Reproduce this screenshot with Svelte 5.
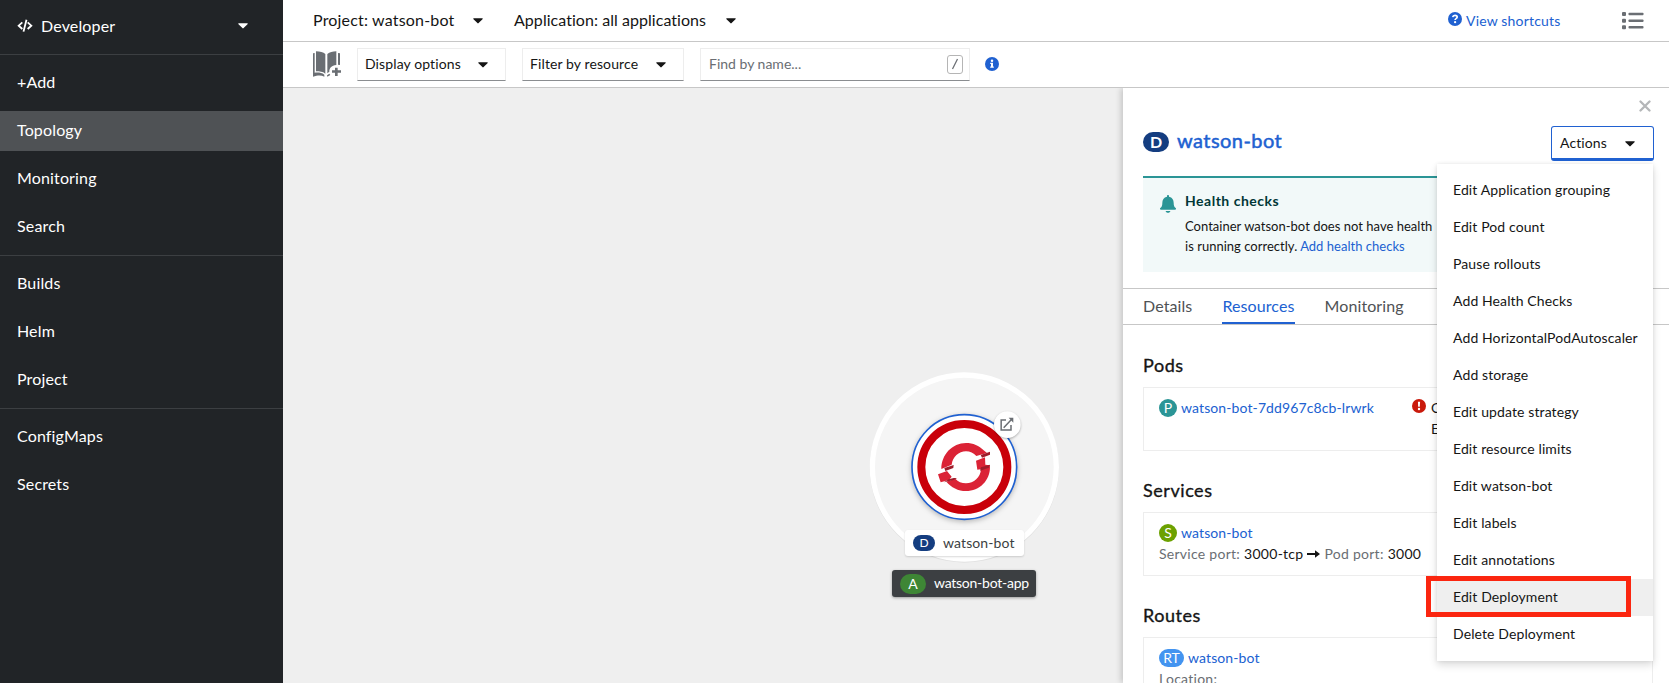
<script>
  const nav = [
    ['+Add', 'Topology', 'Monitoring', 'Search'],
    ['Builds', 'Helm', 'Project'],
    ['ConfigMaps', 'Secrets']
  ];
  const activeNav = 'Topology';
  const tabs = ['Details', 'Resources', 'Monitoring'];
  const activeTab = 'Resources';
  const actions = [
    'Edit Application grouping',
    'Edit Pod count',
    'Pause rollouts',
    'Add Health Checks',
    'Add HorizontalPodAutoscaler',
    'Add storage',
    'Edit update strategy',
    'Edit resource limits',
    'Edit watson-bot',
    'Edit labels',
    'Edit annotations',
    'Edit Deployment',
    'Delete Deployment'
  ];
  const hovered = 'Edit Deployment';
</script>

{#snippet caret()}
  <svg class="caret" viewBox="0 0 10 6" width="10" height="6"><path d="M.9.3h8.2c.6 0 .8.6.4 1L5.6 5.100c-.4.4-.8.4-1.200 0L.5 1.300C.1.900.3.300.9.300z" fill="currentColor" /></svg>
{/snippet}

<div class="app">
  <nav class="sidebar">
    <div class="perspective">
      <svg viewBox="0 0 48 40" width="16" height="13.300" fill="none" stroke="#fff" stroke-width="5.500">
        <path d="M16 10 5 20l11 10M32 10l11 10-11 10M28.500 2l-9 36" />
      </svg>
      <span>Developer</span>
      {@render caret()}
    </div>
    {#each nav as group}
      <ul>
        {#each group as item}
          <li class:active={item === activeNav}>{item}</li>
        {/each}
      </ul>
    {/each}
  </nav>

  <main>
    <header class="context">
      <span class="project">Project: watson-bot</span>
      {@render caret()}
      <span class="application">Application: all applications</span>
      {@render caret()}
      <a class="shortcuts" href="#shortcuts">
        <svg viewBox="0 0 14 14" width="14" height="14"><circle cx="7" cy="7" r="7" fill="#2061d1" /><path d="M4.700 5.200C5 3.600 6.100 3.300 7 3.300c1.300 0 2.200.8 2.200 1.800C9.200 6.700 7.100 6.500 7.100 8" fill="none" stroke="#fff" stroke-width="1.700" /><circle cx="7.100" cy="10.200" r="1.150" fill="#fff" /></svg>
        <span>View shortcuts</span>
      </a>
      <svg class="list" viewBox="0 0 22 18" width="22" height="18" fill="#6a6e73">
        <rect x="0" y="0" width="4" height="4" rx="1" /><rect x="6.500" y=".8" width="15" height="2.500" rx=".8" />
        <rect x="0" y="6.700" width="4" height="4" rx="1" /><rect x="6.500" y="7.500" width="15" height="2.500" rx=".8" />
        <rect x="0" y="13.300" width="4" height="4" rx="1" /><rect x="6.500" y="14.100" width="15" height="2.500" rx=".8" />
      </svg>
    </header>

    <div class="toolbar">
      <svg class="book" viewBox="99 156 84 80" width="28" height="26.700" fill="#6a6e73">
        <path d="M108 157c12 1 22 3 28 8v59c-8-6-17-7-28-7z" />
        <path d="M142 165c7-5 16-7 27-8v41c-15 1-22 11-21 20l-6 5z" />
        <path d="M99 163l5-1v59c12-1 21 0 29 6v6c-9-5-19-5-34 0zM174 162l6 1v35l-6-1zM141 229l7-5 3 4-9 5z" />
        <path d="M165 206h8v8h10v7h-10v10h-8v-10h-9v-7h9z" />
      </svg>
      <div class="select display"><span>Display options</span>{@render caret()}</div>
      <div class="select filter"><span>Filter by resource</span>{@render caret()}</div>
      <div class="search"><span>Find by name...</span><kbd><svg viewBox="0 0 8 12" width="8" height="12"><path d="M1.500 11 6.500 1" stroke="#6a6e73" stroke-width="1.300" /></svg></kbd></div>
      <svg class="info" viewBox="0 0 14 14" width="14" height="14"><circle cx="7" cy="7" r="7" fill="#2061d1" /><path d="M5.200 5.700H8v3.700h.8v1.400H5.200V9.400H6V7.100h-.8z" fill="#fff" /><circle cx="7" cy="3.800" r="1.250" fill="#fff" /></svg>
    </div>

    <div class="body">
      <section class="canvas">
        <svg class="node" viewBox="0 0 630 630" width="210" height="210">
          <circle cx="313" cy="324" r="284" fill="#000" opacity=".06" />
          <circle cx="313" cy="321" r="276" fill="#f5f5f5" stroke="#fff" stroke-width="16" />
          <circle class="disc" cx="313" cy="321" r="157" fill="#fff" stroke="#2061d1" stroke-width="5" />
          <circle cx="313" cy="321" r="129" fill="#fff" stroke="#c9000a" stroke-width="24" />
          <g transform="translate(120 135)">
            <path fill="#db2336" d="M124 192C124 149 157 114 198 114c21 0 40 8 53 22l10 8-32 9c-8-8-19-14-31-14-22 0-40 17-43 40z" />
            <path fill="#db2336" d="M270 186c0 41-31 72-72 72-23 0-45-11-59-28l27-9c8 9 19 14 32 14 24 0 43-17 45-42z" />
            <path fill="#db2336" d="m114 208 27-10 14 17-8 10-25 7zM228 167l27-10 1 22 14 2-1 7-37 6z" />
            <path fill="#9e1d2b" d="m133 189 28-9-1 9-24 9zM146 223l15-4h10l-10 6-29 7zM242 150l28-10v9l-24 9zM243 187l27-8-3 9-27 9z" />
          </g>
        </svg>
        <svg class="open" viewBox="0 0 90 90" width="30" height="30">
          <circle cx="46" cy="47" r="40" fill="#fff" />
          <g fill="none" stroke="#6a6e73" stroke-width="4.500"><path d="M42 33H27.500v30H57V48M35 56l24-25" /></g>
          <path d="M50 26h14v15z" fill="#6a6e73" />
        </svg>
        <div class="node-label"><b>D</b><span>watson-bot</span></div>
        <div class="app-label"><b>A</b><span>watson-bot-app</span></div>
      </section>

      <aside class="panel">
        <svg class="close" viewBox="0 0 12 12" width="12" height="12"><path d="m1.500 1.500 9 9m0-9-9 9" stroke="#b4b6b8" stroke-width="2.300" stroke-linecap="round" /></svg>
        <div class="title">
          <b class="badge deployment">D</b>
          <h1>watson-bot</h1>
          <div class="actions">
            <button><span>Actions</span>{@render caret()}</button>
            <ul class="menu">
              {#each actions as action}
                <li class:hovered={action === hovered}>{action}</li>
              {/each}
            </ul>
            <div class="highlight"></div>
          </div>
        </div>
        <div class="alert">
          <svg viewBox="0 0 48 54" width="16" height="18" fill="#2b9596"><path d="M21 3c0-4 6-4 6 0v2c10 2 14 9 14 18 0 10 2 13 6 16 2 2 1 5-2 5H3c-3 0-4-3-2-5 4-3 6-6 6-16C7 14 11 7 21 5zM17 48h14c0 7-14 7-14 0z" /></svg>
          <div>
            <h4>Health checks</h4>
            <p>Container watson-bot does not have health<br />is running correctly. <a href="#health">Add health checks</a></p>
          </div>
        </div>
        <div class="tabs">
          {#each tabs as tab}
            <span class:active={tab === activeTab}>{tab}</span>
          {/each}
        </div>
        <div class="resources">
          <h2>Pods</h2>
          <div class="card pod">
            <div class="row"><b class="badge p">P</b><a href="#pod">watson-bot-7dd967c8cb-lrwrk</a></div>
            <div class="status">
              <svg viewBox="0 0 14 14" width="14" height="14"><circle cx="7" cy="7" r="7" fill="#c9190b" /><path d="M5.900 2.800h2.200l-.3 5H6.200z" fill="#fff" /><circle cx="7" cy="10" r="1.200" fill="#fff" /></svg>
              <span>C<br />E</span>
            </div>
          </div>
          <h2>Services</h2>
          <div class="card">
            <div class="row"><b class="badge s">S</b><a href="#service">watson-bot</a></div>
            <div class="port">
              <span class="muted">Service port:</span><span>3000-tcp</span>
              <svg viewBox="0 0 13 8" width="13" height="8"><path d="M0 3h8V.3L13 4 8 7.700V5H0z" fill="#151515" /></svg>
              <span class="muted">Pod port:</span><span>3000</span>
            </div>
          </div>
          <h2>Routes</h2>
          <div class="card">
            <div class="row"><b class="badge rt">RT</b><a href="#route">watson-bot</a></div>
            <div class="port"><span class="muted">Location:</span></div>
          </div>
        </div>
      </aside>
    </div>
  </main>
</div>

<style>
  .app, .app * { box-sizing: border-box; }
  .app {
    display: flex;
    width: 1669px;
    height: 683px;
    overflow: hidden;
    font: 14px/21px Lato, "Open Sans", sans-serif;
    letter-spacing: 0.11px;
    color: #151515;
    background: #fff;
  }
  ul { margin: 0; padding: 0; list-style: none; }
  h1, h2, h4, p { margin: 0; }
  a { color: #2061d1; text-decoration: none; }
  svg { flex: none; display: block; }

  .sidebar { flex: none; width: 283px; background: #212427; color: #fff; font-size: 16px; letter-spacing: 0.15px; }
  .perspective { display: flex; align-items: center; height: 54px; padding: 0 35px 2px 17px; gap: 8px; }
  .perspective span { flex: 1; margin-top: -2px; }
  .sidebar ul { display: flex; flex-direction: column; gap: 8px; padding: 8px 0; border-top: 1px solid #3c3f42; }
  .sidebar li { height: 40px; padding-left: 17px; line-height: 37px; }
  .sidebar li.active { background: #4f5255; }

  main { flex: 1; min-width: 0; display: flex; flex-direction: column; }
  .context { flex: none; display: flex; align-items: center; height: 42px; padding: 0 25px 0 30px; border-bottom: 1px solid #c7c7c7; font-size: 16px; letter-spacing: 0.18px; }
  .project, .application { margin-top: -2px; white-space: nowrap; }
  .project { width: 160px; }
  .application { width: 212px; margin-left: 31px; letter-spacing: 0.05px; }
  .shortcuts { display: flex; align-items: center; gap: 4px; width: 110px; margin-left: auto; font-size: 14px; white-space: nowrap; }
  .shortcuts svg { margin-top: -3px; }
  .shortcuts span { margin-top: -1px; }
  .list { margin-left: 64px; }

  .toolbar { flex: none; display: flex; align-items: center; height: 46px; padding: 0 30px; border-bottom: 1px solid #c7c7c7; }
  .select, .search { display: flex; align-items: center; justify-content: space-between; height: 33px; border: 1px solid #ededed; border-bottom-color: #8a8d90; }
  .select span, .search span { margin-top: -2px; }
  .select { padding: 0 17px 0 7px; }
  .display { width: 149px; margin-left: 16px; }
  .filter { width: 162px; margin-left: 16px; }
  .search { width: 270px; margin-left: 16px; padding: 0 6px 0 8px; color: #6a6e73; }
  .search span { letter-spacing: 0; }
  kbd { display: flex; align-items: center; justify-content: center; width: 16px; height: 19px; margin-top: -1px; border: 1px solid #b5b5b5; border-radius: 3px; }
  .info { margin: -1px 0 0 15px; }

  .body { flex: 1; min-height: 0; display: flex; }
  .canvas { position: relative; flex: 1; background: #efefef; overflow: hidden; }
  .node, .open, .node-label, .app-label { position: absolute; }
  .node { left: 577px; top: 272px; }
  .disc { filter: drop-shadow(0 5px 8px rgba(0, 0, 0, 0.25)); }
  .open { left: 709px; top: 321px; filter: drop-shadow(0 1px 1px rgba(0, 0, 0, 0.3)); }
  .node-label, .app-label { display: flex; align-items: center; border-radius: 3px; white-space: nowrap; }
  .node-label { left: 622px; top: 442px; width: 119px; height: 26px; padding-left: 8px; gap: 8px; background: #fff; color: #3c3f42; box-shadow: 0 1px 2px rgba(0, 0, 0, 0.15); }
  .app-label { left: 609px; top: 482px; width: 144px; height: 27px; padding-left: 8px; gap: 8px; background: #3c3f42; color: #fff; letter-spacing: -0.25px; box-shadow: 0 1px 3px rgba(0, 0, 0, 0.35); }
  .node-label span, .app-label span { margin-top: -2px; }
  .node-label b, .app-label b { display: flex; align-items: center; justify-content: center; padding-bottom: 1px; color: #fff; font-weight: 400; letter-spacing: 0; }
  .node-label b { width: 22px; height: 16px; border-radius: 8px; background: #143d80; font-size: 12px; }
  .app-label b { width: 26px; height: 20px; border-radius: 10px; background: #3e8635; }

  .panel { z-index: 1; flex: none; display: flex; flex-direction: column; width: 546px; background: #fff; box-shadow: -2px 0 6px rgba(0, 0, 0, 0.18); clip-path: inset(0 0 0 -12px); }
  .panel > * { flex: none; }
  .close { margin: 12px 18px 0 auto; }
  .title { display: flex; align-items: center; height: 35px; margin: 14px 15px 0 20px; }
  .badge { display: flex; align-items: center; justify-content: center; height: 18px; padding-bottom: 1px; border-radius: 10px; color: #fff; font-weight: 400; letter-spacing: 0; }
  .deployment { width: 26px; height: 20px; margin-top: -3px; padding-bottom: 2px; background: #143d80; font-size: 16px; font-weight: 700; }
  h1 { margin: -6px 0 0 8px; font-size: 20px; font-weight: 400; color: #2061d1; -webkit-text-stroke: 0.5px; letter-spacing: 0.45px; }
  .actions { position: relative; margin-left: auto; }
  button { display: flex; align-items: center; justify-content: space-between; width: 103px; height: 35px; padding: 0 18px 0 8px; border: 1px solid #2061d1; border-bottom-width: 3px; border-radius: 3px; background: #fff; color: inherit; font: inherit; letter-spacing: inherit; }
  button .caret, button :global(.caret) { margin-top: 2px; }
  .menu { position: absolute; left: -114px; top: 38px; width: 216px; padding: 8px 0; background: #fff; box-shadow: 0 4px 8px rgba(0, 0, 0, 0.14), 0 0 4px rgba(0, 0, 0, 0.08); }
  .menu li { height: 37px; padding-left: 16px; line-height: 36px; white-space: nowrap; }
  .menu li.hovered { background: #efefef; }
  .highlight { position: absolute; left: -125px; top: 450px; width: 205px; height: 41px; border: 5px solid #fb2610; }

  .alert { display: flex; gap: 9px; height: 96px; margin: 15px 16px 0 20px; padding: 12px 0 0 17px; border-top: 2px solid #2b9596; background: #f2f9f9; }
  .alert svg { margin-top: 5px; }
  h4 { font-size: 14px; line-height: 21px; color: #003737; letter-spacing: 0.5px; }
  .alert p { margin-top: 5px; font-size: 13px; line-height: 20px; letter-spacing: 0.02px; white-space: nowrap; }

  .tabs { display: flex; gap: 30px; height: 37px; margin-top: 16px; padding-left: 20px; border: solid #c7c7c7; border-width: 1px 0; font-size: 16px; line-height: 33px; letter-spacing: 0.1px; color: #4f5255; }
  .tabs .active { color: #2061d1; border-bottom: 2px solid #2061d1; }
  .resources { padding: 0 16px 0 20px; }
  h2 { height: 61px; padding-top: 29px; font-size: 18px; line-height: 21px; font-weight: 400; letter-spacing: 0.55px; -webkit-text-stroke: 0.35px; }
  h2:first-child { height: 62px; padding-top: 30px; }
  .card { height: 64px; padding: 9px 15px; border: 1px solid #ededed; }
  .row { display: flex; align-items: center; gap: 4px; height: 21px; }
  .p { width: 18px; background: #2b9596; }
  .s { width: 18px; background: #6ca100; }
  .rt { width: 25px; background: #4394f0; }
  .pod { display: flex; }
  .status { display: flex; gap: 5px; margin-left: 38px; }
  .status svg { margin-top: 2px; }
  .status span { line-height: 21px; }
  .port { display: flex; align-items: center; gap: 4px; height: 21px; letter-spacing: 0.27px; white-space: nowrap; }
  .muted { color: #6a6e73; }
</style>
